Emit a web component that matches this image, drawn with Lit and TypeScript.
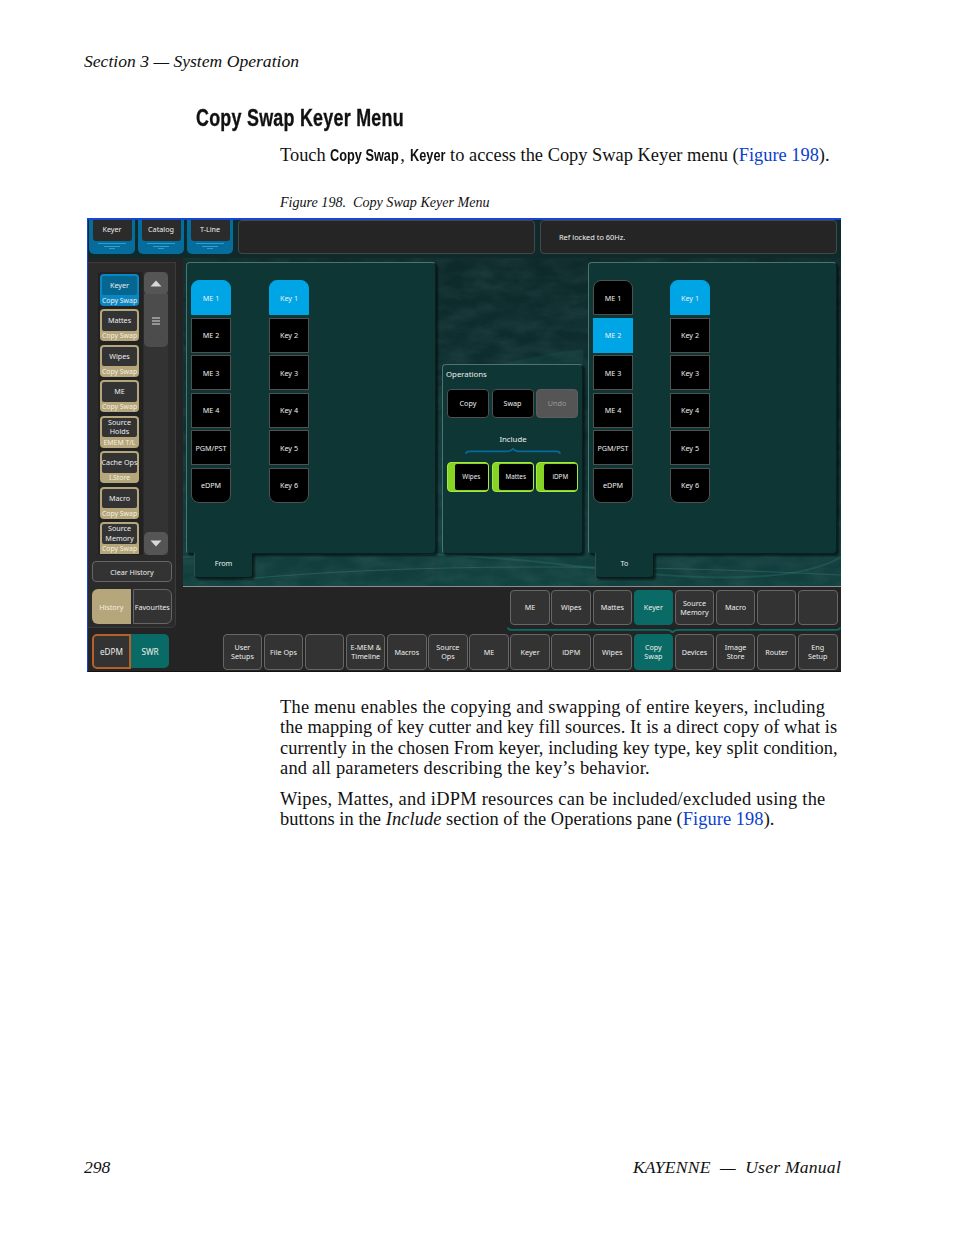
import { LitElement, html, css, svg } from "lit";
import { customElement } from "lit/decorators.js";

const braceWide = svg`<svg class="brace-svg" viewBox="0 0 334 6" width="334" height="6"><path d="M1 0.5 Q1 2.8 5 2.8 H159 Q164 2.8 165.5 5.5 Q167 2.8 172 2.8 H329 Q333 2.8 333 0.5" fill="none" stroke="#0b6d68" stroke-width="1.8"/></svg>`;
const braceOps = svg`<svg class="brace-svg" viewBox="0 0 96 7" width="96" height="7"><path d="M1 6 Q1 3.4 5 3.4 H42 Q46 3.4 48 0.8 Q50 3.4 54 3.4 H91 Q95 3.4 95 6" fill="none" stroke="#07699c" stroke-width="1.6"/></svg>`;

const sideItems = [
  { l: ["Keyer"], s: "Copy Swap", active: true },
  { l: ["Mattes"], s: "Copy Swap" },
  { l: ["Wipes"], s: "Copy Swap" },
  { l: ["ME"], s: "Copy Swap" },
  { l: ["Source", "Holds"], s: "EMEM T/L" },
  { l: ["Cache Ops"], s: "I.Store" },
  { l: ["Macro"], s: "Copy Swap" },
  { l: ["Source", "Memory"], s: "Copy Swap", last: true },
];
const nav1 = [["ME"], ["Wipes"], ["Mattes"], ["Keyer", "on"], ["Source|Memory"], ["Macro"], [""], [""]];
const nav2 = [["User|Setups"], ["File Ops"], [""], ["E-MEM &|Timeline"], ["Macros"], ["Source|Ops"], ["ME"], ["Keyer"], ["iDPM"], ["Wipes"], ["Copy|Swap", "on"], ["Devices"], ["Image|Store"], ["Router"], ["Eng|Setup"]];

// letter-spacing per line, so each line of the substitute serif ends where the reference's does
const para1: [string, number][] = [
  ["The menu enables the copying and swapping of entire keyers, including", 0.24],
  ["the mapping of key cutter and key fill sources. It is a direct copy of what is", 0.08],
  ["currently in the chosen From keyer, including key type, key split condition,", 0.05],
  ["and all parameters describing the key’s behavior.", 0.22],
];

function lines(t: string) {
  return t.split("|").map((x) => html`<span>${x}</span>`);
}

@customElement("app-root")
export class AppRoot extends LitElement {
  static styles = css`
    :host { display: block; width: 954px; height: 1235px; background: #fff; overflow: hidden; color: #111; font-family: "Liberation Serif", serif; }
    .page { display: flex; flex-direction: column; height: 1235px; box-sizing: border-box; padding: 51px 113px 0 84px; }
    .runhead { font-style: italic; font-size: 17.6px; line-height: 21px; height: 21px; }
    h1 { margin: 32px 0 0 112px; font: 700 24px/28px "Liberation Sans", sans-serif; height: 28px; letter-spacing: 0.35px; white-space: nowrap; }
    h1 span { display: inline-block; transform: scaleX(.745); transform-origin: 0 50%; -webkit-text-stroke: .35px #111; }
    .lead { margin: 13px 0 0 196px; font-size: 18.4px; line-height: 21px; height: 21px; white-space: nowrap; }
    .lead b { display: inline-block; font: 700 17px "Liberation Sans", sans-serif; transform: scaleX(.75); transform-origin: 0 50%; white-space: nowrap; }
    .lead b.cs { width: 70px; }
    .lead b.ky { width: 36px; }
    a { color: #0a3fd0; text-decoration: none; }
    .cap { margin: 28px 0 0 196px; font-style: italic; font-size: 14.1px; line-height: 17px; height: 17px; white-space: nowrap; }
    .screen { margin: 7px 0 0 3px; width: 754px; height: 454px; flex: none; box-sizing: border-box; border-top: 2px solid #1746d6; border-left: 1.5px solid #1746d6; border-bottom: 1px solid #111; background: #2a2a2a; display: flex; flex-direction: column; font-family: "Noto Sans", sans-serif; font-size: 7.2px; color: #eee; overflow: hidden; }
    .body { margin: 25px 0 0 196px; font-size: 18.4px; line-height: 20.3px; white-space: nowrap; }
    .body + .body { margin-top: 11px; }
    .body div { height: 20.3px; }
    .ls5 { letter-spacing: .26px; }
    .ls6 { letter-spacing: .07px; }
    .foot { margin-top: auto; margin-bottom: 57px; display: flex; justify-content: space-between; font-style: italic; font-size: 17.6px; line-height: 21px; }
    .foot .r { letter-spacing: .23px; }

    .top { height: 38px; flex: none; display: flex; gap: 3px; background: #10292a; padding-left: 1px; }
    .tab { width: 46px; height: 34px; box-sizing: border-box; background: #056c9c; border-radius: 0 0 5px 5px; padding: 0 4px; display: flex; flex-direction: column; align-items: center; overflow: visible; }
    .tab .in { width: 39px; height: 21px; padding-bottom: 3px; box-sizing: border-box; background: #2b2b2b; border-radius: 0 0 3px 3px; display: flex; align-items: center; justify-content: center; }
    .tab i { display: block; height: 1px; background: #2a9fd3; margin-top: 1.5px; }
    .tab i:nth-of-type(1) { width: 28px; margin-top: 2px; }
    .tab i:nth-of-type(2) { width: 16px; }
    .tab i:nth-of-type(3) { width: 6px; }
    .bar { height: 34px; box-sizing: border-box; background: #252525; border: 1.5px solid #404a4a; border-radius: 4px; display: flex; align-items: center; padding-left: 18px; font-size: 7.4px; }
    .bar.a { width: 297px; margin-left: 2px; }
    .bar.b { width: 297px; margin-left: 2px; }

    .mid { flex: 1; display: flex; min-height: 0; background: #242424; }
    .side { width: 88px; flex: none; height: 366px; margin-top: 4px; box-sizing: border-box; background: #2b2b2b; border: 1.5px solid #3c3c3c; border-left: 0; border-bottom-right-radius: 5px; display: flex; flex-direction: column; padding: 9px 3px 0 4px; }
    .siderow { display: flex; height: 283px; padding-left: 6px; }
    .list { width: 45px; background: #222; box-sizing: border-box; padding: 1.5px 4px 0 2px; display: flex; flex-direction: column; gap: 3.5px; overflow: hidden; border-radius: 3px; }
    .it { width: 39px; height: 32px; flex: none; box-sizing: border-box; background: #b5a67b; border-radius: 4px; padding: 2px 2px 0; display: flex; flex-direction: column; align-items: stretch; text-align: center; }
    .it.last { height: 31.5px; border-radius: 4px 4px 0 0; }
    .it .in { height: 19.5px; background: #333; border-radius: 2px; display: flex; flex-direction: column; align-items: center; justify-content: center; line-height: 9.4px; white-space: nowrap; }
    .it .sub { flex: 1; display: flex; align-items: center; justify-content: center; color: #f4f0e0; white-space: nowrap; font-size: 6.9px; }
    .it.on { background: #0a86c4; }
    .it.on .in { background: #05668f; }
    .scroll { width: 24px; margin-left: 1px; background: #333; display: flex; flex-direction: column; justify-content: space-between; }
    .sb { width: 24px; background: #555; border-radius: 5px; display: flex; align-items: center; justify-content: center; }
    .sb.up, .sb.dn { height: 23px; }
    .thumb { height: 53px; width: 24px; background: #4c4c4c; border-radius: 0 0 5px 5px; display: flex; align-items: center; justify-content: center; margin-top: -1px; }
    .upw { display: flex; flex-direction: column; }
    .clear { width: 80px; height: 21px; margin-top: 6px; box-sizing: border-box; background: #333; border: 1.5px solid #666; border-radius: 4px; display: flex; align-items: center; justify-content: center; }
    .tabs { display: flex; margin-top: 7px; gap: 2px; }
    .hs { width: 39px; height: 35px; box-sizing: border-box; background: #b5a67b; border-radius: 6px 0 0 6px; display: flex; align-items: center; justify-content: center; color: #f4f0e0; }
    .fv { width: 40px; height: 35px; box-sizing: border-box; background: #333; border: 1.5px solid #666; border-radius: 0 6px 6px 0; display: flex; align-items: center; justify-content: center; }

    .right { flex: 1; margin-left: 7px; display: flex; flex-direction: column; min-width: 0; }
    .canvas { position: relative; height: 329px; flex: none; box-sizing: border-box; border-bottom: 1px solid #8a8f8f; background: linear-gradient(180deg, #0e2a2b 0%, #0f3032 55%, #12403f 100%); display: flex; padding: 4px 4px 0 3px; overflow: hidden; }
    .deco { position: absolute; inset: 0; width: 100%; height: 100%; }
    .wrap { position: relative; display: flex; flex-direction: column; }
    .panel { height: 292px; box-sizing: border-box; background: #0d3634; border: 1px solid #4f7370; border-right-color: #0a1f1f; border-bottom-color: #0a1f1f; border-radius: 4px; box-shadow: 2px 2px 2px rgba(0,0,0,.55); display: flex; gap: 38px; padding: 17px 0 0 4px; }
    .col { display: flex; flex-direction: column; gap: 2.6px; width: 40px; }
    .k { height: 35px; box-sizing: border-box; background: #000; border: 1.5px solid #505050; display: flex; align-items: center; justify-content: center; white-space: nowrap; }
    .k.first { border-radius: 8px 8px 0 0; }
    .k.last { border-radius: 0 0 8px 8px; }
    .k.sel { background: #00a5e6; border-color: #00a5e6; }
    .tag { position: relative; z-index: 1; margin-top: -1px; width: 59px; height: 25px; padding-bottom: 4px; box-sizing: border-box; background: #0d3634; border: 1px solid #2c4e4c; border-top: 0; border-right-color: #081a1a; border-bottom-color: #081a1a; border-radius: 0 0 4px 4px; display: flex; align-items: center; justify-content: center; box-shadow: 2px 2px 2px rgba(0,0,0,.5); }
    .from .tag { margin-left: 8px; }
    .to .tag { margin-left: 7px; }
    .from .panel { width: 250px; }
    .ops { margin: 102px 6px 0 6px; }
    .ops .panel { width: 141px; height: 190px; flex-direction: column; gap: 0; padding: 4px 4px 0 4px; display: flex; }
    .to { margin-left: -1px; }
    .to .panel { width: 249px; gap: 37px; }
    .ttl { font-size: 7.8px; height: 11px; line-height: 11px; margin-left: -1px; }
    .row3 { display: flex; gap: 2.5px; margin-top: 8.5px; }
    .row3.g3 { margin-top: 0; }
    .o { width: 42px; height: 29px; box-sizing: border-box; background: #000; border: 1.5px solid #505050; border-radius: 4px; display: flex; align-items: center; justify-content: center; }
    .o.dis { background: #555; border-color: #5d5d5d; color: #9a9a9a; }
    .inc { text-align: center; font-size: 7.8px; line-height: 11px; margin-top: 16.5px; padding-left: 1px; }
    .brace-svg { display: block; }
    .bw { display: flex; justify-content: center; margin: 3px 0 6.5px; }
    .g { width: 42px; height: 30px; box-sizing: border-box; background: #86d423; border: 1.5px solid #a9e840; border-radius: 4px; display: flex; padding-left: 6.5px; }
    .g span { flex: 1; background: #000; border-radius: 2px; display: flex; align-items: center; justify-content: center; font-size: 6.3px; margin: 1px 0; }

    .nav { display: flex; gap: 1.6px; justify-content: flex-end; padding-right: 3.5px; }
    .n { width: 39.5px; height: 35px; flex: none; box-sizing: border-box; background: #333; border: 1.5px solid #666; border-radius: 4px; display: flex; flex-direction: column; align-items: center; justify-content: center; line-height: 9px; text-align: center; white-space: nowrap; }
    .n.on { background: #0a6b66; border-color: #0a6b66; }
    .nr1 { margin-top: 3px; }
    .bwide { display: flex; justify-content: flex-end; margin-top: 2px; }
    .footrow { height: 37px; flex: none; display: flex; background: #242424; align-items: flex-start; padding-left: 4px; }
    .ed { width: 39px; height: 35px; box-sizing: border-box; background: #333; border: 2px solid #b5602a; border-radius: 5px 0 0 5px; display: flex; align-items: center; justify-content: center; font-size: 8.2px; }
    .sw { width: 38px; height: 34px; background: #0a6b66; border-radius: 0 5px 5px 0; display: flex; align-items: center; justify-content: center; font-size: 8.2px; }
    .footrow .nav { flex: 1; }
    .footrow .n { height: 36px; }
  `;

  private keyCol(names: string[], sel: number) {
    return html`<div class="col">${names.map((n, i) => html`<div class="k ${i === 0 ? "first" : ""} ${i === 5 ? "last" : ""} ${i === sel ? "sel" : ""}">${n}</div>`)}</div>`;
  }

  private screen() {
    const me = ["ME 1", "ME 2", "ME 3", "ME 4", "PGM/PST", "eDPM"];
    const key = ["Key 1", "Key 2", "Key 3", "Key 4", "Key 5", "Key 6"];
    return html`<div class="screen">
      <div class="top">
        ${["Keyer", "Catalog", "T-Line"].map((t) => html`<div class="tab"><div class="in">${t}</div><i></i><i></i><i></i></div>`)}
        <div class="bar a"></div>
        <div class="bar b">Ref locked to 60Hz.</div>
      </div>
      <div class="mid">
        <div class="side">
          <div class="siderow">
            <div class="list">
              ${sideItems.map((s) => html`<div class="it ${s.active ? "on" : ""} ${s.last ? "last" : ""}"><div class="in">${s.l.map((x) => html`<span>${x}</span>`)}</div><div class="sub">${s.s}</div></div>`)}
            </div>
            <div class="scroll">
              <div class="upw">
                <div class="sb up"><svg width="12" height="7" viewBox="0 0 12 7"><path d="M6 0.5 L11.5 6.5 H0.5Z" fill="#d8d8d8"/></svg></div>
                <div class="thumb"><svg width="10" height="8" viewBox="0 0 10 8"><path d="M1 1H9M1 4H9M1 7H9" stroke="#ddd" stroke-width="1"/></svg></div>
              </div>
              <div class="sb dn"><svg width="12" height="7" viewBox="0 0 12 7"><path d="M0.5 0.5 H11.5 L6 6.5Z" fill="#d8d8d8"/></svg></div>
            </div>
          </div>
          <div class="clear">Clear History</div>
          <div class="tabs"><div class="hs">History</div><div class="fv">Favourites</div></div>
        </div>
        <div class="right">
          <div class="canvas">
            <svg class="deco" viewBox="0 0 658 329" preserveAspectRatio="none">
              <defs><filter id="cloud" x="0" y="0" width="100%" height="100%"><feTurbulence type="fractalNoise" baseFrequency=".035 .08" numOctaves="4" seed="7"/><feColorMatrix values="0 0 0 0 .35  0 0 0 0 .6  0 0 0 0 .58  .9 0 0 0 -.28"/></filter></defs>
              <path d="M255 130 Q340 95 400 92 L400 329 L255 329Z" fill="#134443" opacity=".45"/>
              <rect width="658" height="329" filter="url(#cloud)" opacity=".18"/>
              <path d="M0 300 Q200 285 400 310 T658 300" fill="none" stroke="#2a6360" stroke-width="2" opacity=".5"/>
              <path d="M60 322 Q300 300 658 318" fill="none" stroke="#3a7571" stroke-width="1" opacity=".5"/>
            </svg>
            <div class="wrap from">
              <div class="panel">${this.keyCol(me, 0)}${this.keyCol(key, 0)}</div>
              <div class="tag">From</div>
            </div>
            <div class="wrap ops">
              <div class="panel">
                <div class="ttl">Operations</div>
                <div class="row3"><div class="o">Copy</div><div class="o">Swap</div><div class="o dis">Undo</div></div>
                <div class="inc">Include</div>
                <div class="bw">${braceOps}</div>
                <div class="row3 g3">${["Wipes", "Mattes", "iDPM"].map((t) => html`<div class="g"><span>${t}</span></div>`)}</div>
              </div>
            </div>
            <div class="wrap to">
              <div class="panel">${this.keyCol(me, 1)}${this.keyCol(key, 0)}</div>
              <div class="tag">To</div>
            </div>
          </div>
          <div class="nav nr1">${nav1.map((n) => html`<div class="n ${n[1] || ""}">${lines(n[0])}</div>`)}</div>
          <div class="bwide">${braceWide}</div>
        </div>
      </div>
      <div class="footrow">
        <div class="ed">eDPM</div><div class="sw">SWR</div>
        <div class="nav">${nav2.map((n) => html`<div class="n ${n[1] || ""}">${lines(n[0])}</div>`)}</div>
      </div>
    </div>`;
  }

  render() {
    return html`<div class="page">
      <div class="runhead">Section 3 — System Operation</div>
      <h1><span>Copy Swap Keyer Menu</span></h1>
      <div class="lead">Touch <b class="cs">Copy Swap</b>, <b class="ky">Keyer</b> to access the Copy Swap Keyer menu (<a>Figure 198</a>).</div>
      <div class="cap">Figure 198.&nbsp; Copy Swap Keyer Menu</div>
      ${this.screen()}
      <div class="body">${para1.map(([t, ls]) => html`<div style="letter-spacing:${ls}px">${t}</div>`)}</div>
      <div class="body">
        <div class="ls5">Wipes, Mattes, and iDPM resources can be included/excluded using the</div>
        <div class="ls6">buttons in the <i>Include</i> section of the Operations pane (<a>Figure 198</a>).</div>
      </div>
      <div class="foot"><span>298</span><span class="r">KAYENNE&nbsp; —&nbsp; User Manual</span></div>
    </div>`;
  }
}
